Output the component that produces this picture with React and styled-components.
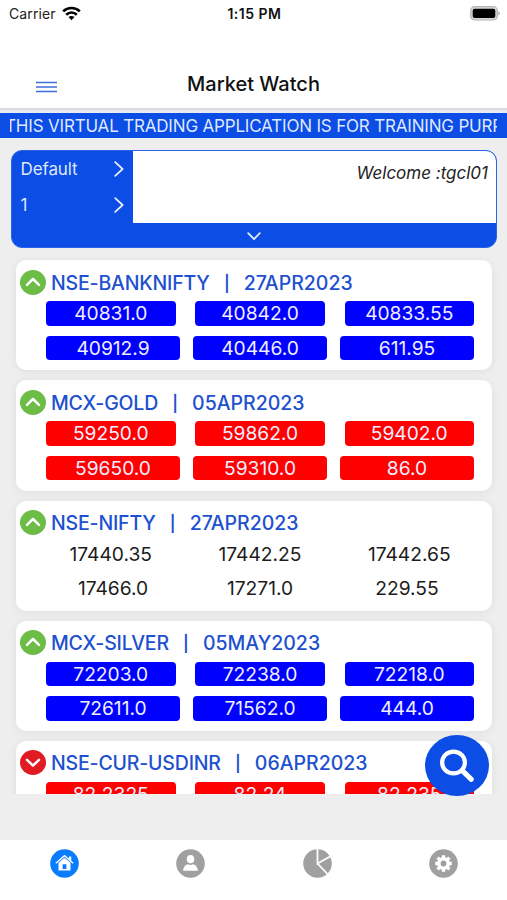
import React from 'react'
import styled, { createGlobalStyle } from 'styled-components'

const GlobalStyle = createGlobalStyle`
*{
  box-sizing: border-box;
}

body{
  margin: 0;
  font-family: Inter, Roboto, sans-serif;
  background: #eeeeee;
}
`

const ScScreen = styled.div`
position: relative;
display: flex;
flex-direction: column;
width: 507px;
height: 900px;
overflow: hidden;
background: #eeeeee;
`

const ScStatusBar = styled.div`
display: grid;
grid-template-columns: 1fr auto 1fr;
align-items: center;
height: 28px;
padding: 0 7px 1px 9px;
background: #fff;
color: #222;
font-size: 14px;

.carrier{
  display: flex;
  align-items: center;
  gap: 6px;
  letter-spacing: 0.1px;
}

.time{
  font-weight: 600;
  letter-spacing: 0.5px;
  color: #111;
}

.battery{
  justify-self: end;
  display: block;
}
`

const ScHeader = styled.header`
display: grid;
grid-template-columns: 1fr auto 1fr;
align-items: center;
height: 82px;
padding: 31px 36px 0;
border-bottom: 2px solid #dcdcdc;
background: #fff;

h1{
  margin: 0;
  font-size: 20px;
  font-weight: 450;
  letter-spacing: 0;
  line-height: 24px;
  color: #111;
}

svg{
  display: block;
  margin-top: 6px;
}
`

const ScBanner = styled.div`
height: 28px;
padding: 0 10px;
border-top: 3px solid #e8ecf0;
background: #0b4de5;

.marquee{
  display: flex;
  overflow: hidden;
  height: 25px;
}

.marqueeText{
  flex: none;
  margin-left: -5px;
  font-size: 17px;
  line-height: 26px;
  letter-spacing: -0.18px;
  white-space: nowrap;
  color: #dfe8ff;
}
`

const ScPanel = styled.section`
display: flex;
flex-direction: column;
height: 98px;
margin: 12px 10px 0 10.5px;
border: 1.5px solid #2a62e8;
border-radius: 11px;
overflow: hidden;
background: #0b4de5;

.panelTop{
  display: flex;
  height: 72px;
}

.panelSide{
  display: flex;
  flex-direction: column;
  width: 121px;
  flex: none;
}

.welcome{
  flex: 1;
  padding: 11px 8px 0 0;
  background: #fff;
  color: #222;
  font-size: 17px;
  font-style: italic;
  line-height: 22px;
  text-align: right;
}

.panelToggle{
  display: flex;
  flex: 1;
  align-items: center;
  justify-content: center;
  padding-top: 3px;
}
`

const ScPick = styled.div`
display: flex;
align-items: center;
justify-content: space-between;
height: 36.5px;
padding: 0 9px 1px 9px;
color: #dfe8ff;
font-size: 17px;
letter-spacing: -0.1px;
`

const ScList = styled.main`
display: flex;
flex-direction: column;
gap: 10px;
height: 546px;
padding: 12.4px 15px 0 15.5px;
overflow: hidden;
`

const ScCard = styled.article`
flex: none;
height: 110.1px;
padding: 9px 18px 0 4.5px;
border-radius: 10px;
background: #fff;
box-shadow: 0 1px 9px rgb(0 0 0 / 7%);

.cardTitle{
  display: flex;
  align-items: center;
  height: 26px;
  color: #1e50cf;
  font-size: 19.5px;
  font-weight: 500;
  line-height: 26px;
  white-space: nowrap;

  svg{
    flex: none;
    margin-right: 5px;
  }

  span{
    padding-top: 1px;
  }

  .name{
    letter-spacing: -0.18px;
  }

  .bar{
    width: 2px;
    margin: 0 16px;
    display: flex;
    justify-content: center;
    font-size: 16px;
    font-weight: 600;
  }
}
`

const ScPrices = styled.div`
display: flex;
justify-content: space-between;
margin: ${(props) => (props.$second ? '9.5px' : '6px')} 0 0 26px;
`

const ScPrice = styled.span`
width: ${(props) => (props.$second ? '134px' : '129.5px')};
height: 24.7px;
border-radius: 4px;
background: ${(props) => props.$color || 'transparent'};
color: ${(props) => (props.$color ? '#eeeeff' : '#1c1c1c')};
font-size: 19.2px;
line-height: 25px;
text-align: center;
`

const ScSearch = styled.button`
position: absolute;
left: 425px;
top: 735px;
display: flex;
align-items: center;
justify-content: center;
width: 64px;
height: 61px;
padding: 0;
border: 0;
border-radius: 50%;
background: #0b4de5;
`

const ScTabBar = styled.nav`
display: grid;
grid-template-columns: repeat(4, 126.4px);
justify-items: center;
height: 60px;
margin-top: auto;
padding: 8.5px 0 0 1.4px;
background: #fff;
`

const BLUE = '#0000ff'
const RED = '#ff0000'

const quotes = [
  {name: 'NSE-BANKNIFTY', expiry: '27APR2023', up: true, color: BLUE, prices: ['40831.0', '40842.0', '40833.55'], range: ['40912.9', '40446.0', '611.95']},
  {name: 'MCX-GOLD', expiry: '05APR2023', up: true, color: RED, prices: ['59250.0', '59862.0', '59402.0'], range: ['59650.0', '59310.0', '86.0']},
  {name: 'NSE-NIFTY', expiry: '27APR2023', up: true, prices: ['17440.35', '17442.25', '17442.65'], range: ['17466.0', '17271.0', '229.55']},
  {name: 'MCX-SILVER', expiry: '05MAY2023', up: true, color: BLUE, prices: ['72203.0', '72238.0', '72218.0'], range: ['72611.0', '71562.0', '444.0']},
  {name: 'NSE-CUR-USDINR', expiry: '06APR2023', up: false, color: RED, prices: ['82.2325', '82.24', '82.235'], range: []},
]

const Chevron = ({width, height, d}) => (
  <svg width={width} height={height} viewBox={`0 0 ${width} ${height}`} fill="none" stroke="#e6edff" strokeWidth="1.8" strokeLinecap="round" strokeLinejoin="round">
    <path d={d} />
  </svg>
)

const TrendIcon = ({up}) => (
  <svg width="26" height="25" viewBox="0 0 26 25" fill="none">
    <ellipse cx="13" cy="12.5" rx="13" ry="12.4" fill={up ? '#6cbd45' : '#e01b24'} />
    <path d={up ? 'M7 14.8L13 9L19 14.8' : 'M7 9.8L13 15.6L19 9.8'} stroke="#fff" strokeWidth="2.5" strokeLinecap="round" strokeLinejoin="round" />
  </svg>
)

const QuoteCard = ({name, expiry, up, color, prices, range}) => (
  <ScCard>
    <div className="cardTitle">
      <TrendIcon up={up} />
      <span className="name">{name}</span>
      <span className="bar">|</span>
      <span>{expiry}</span>
    </div>
    <ScPrices>
      {prices.map((price, index) => <ScPrice key={index} $color={color}>{price}</ScPrice>)}
    </ScPrices>
    <ScPrices $second>
      {range.map((price, index) => <ScPrice key={index} $color={color} $second>{price}</ScPrice>)}
    </ScPrices>
  </ScCard>
)

const App = () => {
  return (
    <ScScreen>
      <GlobalStyle />
      <ScStatusBar>
        <div className="carrier">
          <span>Carrier</span>
          <svg width="19" height="15" viewBox="0 0 19 15" fill="none" stroke="#000" strokeWidth="2.6">
            <path d="M1.2 5.4C5.8 0.9 13.2 0.9 17.8 5.4" />
            <path d="M4.2 8.7C7.2 5.8 11.8 5.8 14.8 8.7" />
            <path d="M6.5 11C8.2 9.5 10.8 9.5 12.5 11L9.5 14.2Z" fill="#000" stroke="none" />
          </svg>
        </div>
        <span className="time">1:15 PM</span>
        <svg className="battery" width="30" height="15" viewBox="0 0 30 15">
          <rect x="0.7" y="0.7" width="26.6" height="13.3" rx="4" fill="#d8d8d8" stroke="#b4b4b4" strokeWidth="1.2" />
          <rect x="2.7" y="2.7" width="22.6" height="9.4" rx="2" fill="#000" />
          <path d="M28.3 5.2Q30 6 30 7.4T28.3 9.6Z" fill="#b4b4b4" />
        </svg>
      </ScStatusBar>
      <ScHeader>
        <svg width="21" height="12" viewBox="0 0 21 12" stroke="#3c6ddd" strokeWidth="1.7">
          <path d="M0 1.5H21M0 6H21M0 10.5H21" />
        </svg>
        <h1>Market Watch</h1>
      </ScHeader>
      <ScBanner>
        <div className="marquee">
          <span className="marqueeText">THIS VIRTUAL TRADING APPLICATION IS FOR TRAINING PURPOSE</span>
        </div>
      </ScBanner>
      <ScPanel>
        <div className="panelTop">
          <div className="panelSide">
            <ScPick><span>Default</span><Chevron width={10} height={16} d="M1.2 1.2L8.6 8L1.2 14.8" /></ScPick>
            <ScPick><span>1</span><Chevron width={10} height={16} d="M1.2 1.2L8.6 8L1.2 14.8" /></ScPick>
          </div>
          <div className="welcome">Welcome :tgcl01</div>
        </div>
        <div className="panelToggle"><Chevron width={14} height={9} d="M1.2 1.2L7 7.2L12.8 1.2" /></div>
      </ScPanel>
      <ScList>
        {quotes.map((quote) => <QuoteCard key={quote.name} {...quote} />)}
      </ScList>
      <ScTabBar>
        <svg width="29" height="29" viewBox="0 0 29 29">
          <circle cx="14.5" cy="14.5" r="14.3" fill="#0a7cff" />
          <path d="M5.8 14.2L14.5 6.6L23.2 14.2" fill="none" stroke="#fff" strokeWidth="1.4" />
          <path d="M19 7.4H21.2V12L19 10Z" fill="#fff" />
          <path fillRule="evenodd" d="M8.5 13.8L14.5 8.8L20.5 13.8V21.5H8.5ZM12.6 15.2V20H16.4V15.2Z" fill="#fff" />
        </svg>
        <svg width="29" height="29" viewBox="0 0 29 29">
          <circle cx="14.5" cy="14.5" r="14.3" fill="#a0a0a0" />
          <ellipse cx="14.5" cy="10.2" rx="3.7" ry="4.1" fill="#fff" />
          <path d="M7.2 21.7C7.2 17.5 10 15.6 12.2 15.2Q14.5 16.6 16.8 15.2C19 15.6 21.8 17.5 21.8 21.7Z" fill="#fff" />
        </svg>
        <svg width="29" height="29" viewBox="0 0 29 29">
          <circle cx="14.5" cy="14.5" r="14.3" fill="#a0a0a0" />
          <path d="M14.5 0V14.5L28 7M14.5 14.5L25 25.5" fill="none" stroke="#fff" strokeWidth="1.8" />
        </svg>
        <svg width="29" height="29" viewBox="0 0 29 29">
          <circle cx="14.5" cy="14.5" r="14.3" fill="#a0a0a0" />
          <circle cx="14.5" cy="14.5" r="4.7" fill="none" stroke="#fff" strokeWidth="3.6" />
          <path d="M14.5 6.2V9M14.5 20V22.8M6.2 14.5H9M20 14.5H22.8M8.6 8.6L10.6 10.6M18.4 18.4L20.4 20.4M8.6 20.4L10.6 18.4M18.4 10.6L20.4 8.6" stroke="#fff" strokeWidth="3.4" />
        </svg>
      </ScTabBar>
      <ScSearch aria-label="Search">
        <svg width="36" height="34" viewBox="0 0 36 34" fill="none" stroke="#fff">
          <ellipse cx="14.5" cy="13.5" rx="11.4" ry="10.9" strokeWidth="4.2" />
          <path d="M23.3 21.7L32.3 30.3" strokeWidth="5.2" strokeLinecap="round" />
        </svg>
      </ScSearch>
    </ScScreen>
  )
}

export default App
